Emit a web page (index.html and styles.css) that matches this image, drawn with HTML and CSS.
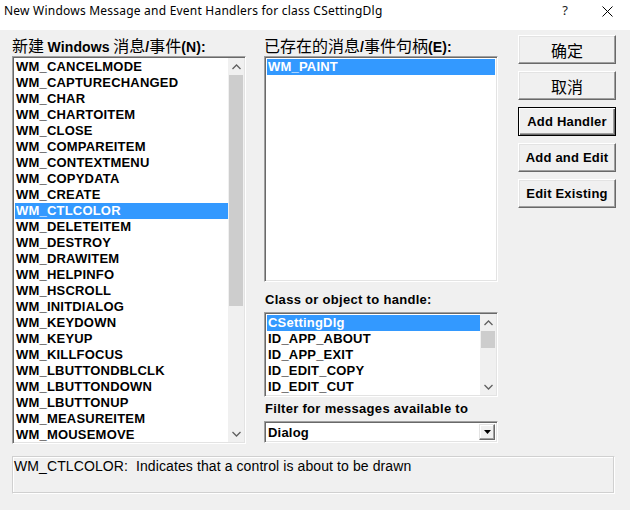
FILE: index.html
```html
<!DOCTYPE html>
<html>
<head>
<meta charset="utf-8">
<link rel="stylesheet" href="styles.css">
</head>
<body>
<div class="window">
  <div class="titlebar">
    <span class="title">New Windows Message and Event Handlers for class CSettingDlg</span>
    <span class="tb-help">?</span>
    <span class="tb-close"><svg width="11" height="11" viewBox="0 0 11 11"><path d="M0.5 0.5 L10.5 10.5 M10.5 0.5 L0.5 10.5" stroke="#000" stroke-width="1" fill="none"/></svg></span>
  </div>
  <div class="body">
    <div class="col col-left">
      <div class="label">新建 <b>Windows</b> 消息<b>/</b>事件<b>(N):</b></div>
      <div class="listbox big">
        <div class="items">
          <div class="item">WM_CANCELMODE</div>
          <div class="item">WM_CAPTURECHANGED</div>
          <div class="item">WM_CHAR</div>
          <div class="item">WM_CHARTOITEM</div>
          <div class="item">WM_CLOSE</div>
          <div class="item">WM_COMPAREITEM</div>
          <div class="item">WM_CONTEXTMENU</div>
          <div class="item">WM_COPYDATA</div>
          <div class="item">WM_CREATE</div>
          <div class="item sel">WM_CTLCOLOR</div>
          <div class="item">WM_DELETEITEM</div>
          <div class="item">WM_DESTROY</div>
          <div class="item">WM_DRAWITEM</div>
          <div class="item">WM_HELPINFO</div>
          <div class="item">WM_HSCROLL</div>
          <div class="item">WM_INITDIALOG</div>
          <div class="item">WM_KEYDOWN</div>
          <div class="item">WM_KEYUP</div>
          <div class="item">WM_KILLFOCUS</div>
          <div class="item">WM_LBUTTONDBLCLK</div>
          <div class="item">WM_LBUTTONDOWN</div>
          <div class="item">WM_LBUTTONUP</div>
          <div class="item">WM_MEASUREITEM</div>
          <div class="item">WM_MOUSEMOVE</div>
        </div>
        <div class="vscroll">
          <div class="arrow"><svg width="9" height="6" viewBox="0 0 9 6"><path d="M0.5 5 L4.5 1 L8.5 5" stroke="#606060" stroke-width="1.3" fill="none"/></svg></div>
          <div class="track"><div class="thumb thumb-big"></div></div>
          <div class="arrow"><svg width="9" height="6" viewBox="0 0 9 6"><path d="M0.5 1 L4.5 5 L8.5 1" stroke="#606060" stroke-width="1.3" fill="none"/></svg></div>
        </div>
      </div>
    </div>
    <div class="col col-mid">
      <div class="label">已存在的消息<b>/</b>事件句柄<b>(E):</b></div>
      <div class="listbox existing">
        <div class="items">
          <div class="item sel">WM_PAINT</div>
        </div>
      </div>
      <div class="label bold-label l2">Class or object to handle:</div>
      <div class="listbox classes">
        <div class="items">
          <div class="item sel">CSettingDlg</div>
          <div class="item">ID_APP_ABOUT</div>
          <div class="item">ID_APP_EXIT</div>
          <div class="item">ID_EDIT_COPY</div>
          <div class="item">ID_EDIT_CUT</div>
        </div>
        <div class="vscroll">
          <div class="arrow"><svg width="9" height="6" viewBox="0 0 9 6"><path d="M0.5 5 L4.5 1 L8.5 5" stroke="#606060" stroke-width="1.3" fill="none"/></svg></div>
          <div class="track"><div class="thumb thumb-small"></div></div>
          <div class="arrow"><svg width="9" height="6" viewBox="0 0 9 6"><path d="M0.5 1 L4.5 5 L8.5 1" stroke="#606060" stroke-width="1.3" fill="none"/></svg></div>
        </div>
      </div>
      <div class="label bold-label l3">Filter for messages available to</div>
      <div class="combo">
        <div class="combo-text">Dialog</div>
        <div class="combo-btn"><svg width="7" height="4" viewBox="0 0 7 4"><path d="M0 0 H7 L3.5 4 Z" fill="#000"/></svg></div>
      </div>
    </div>
    <div class="col col-right">
      <div class="btn cjk">确定</div>
      <div class="btn cjk">取消</div>
      <div class="btn default">Add Handler</div>
      <div class="btn">Add and Edit</div>
      <div class="btn">Edit Existing</div>
    </div>
  </div>
  <div class="status">WM_CTLCOLOR:&nbsp; Indicates that a control is about to be drawn</div>
</div>
</body>
</html>
```

FILE: styles.css
```css
* { box-sizing: border-box; }
html, body { margin: 0; padding: 0; }
body {
  width: 630px;
  height: 510px;
  background: #f0f0f0;
  overflow: hidden;
  font-family: "Liberation Sans", Arial, sans-serif;
  color: #000;
}
.window {
  width: 630px;
  height: 510px;
  background: #f0f0f0;
}
.titlebar {
  height: 30px;
  background: #ffffff;
  display: flex;
  align-items: flex-start;
}
.title {
  font-family: "Noto Sans", "Open Sans", sans-serif;
  font-size: 12px;
  line-height: 16px;
  margin: 3px 0 0 4px;
  flex: 1;
  letter-spacing: 0.22px;
}
.tb-help {
  font-family: "Noto Sans", sans-serif;
  font-size: 13px;
  line-height: 16px;
  margin-top: 2px;
  width: 46px;
  text-align: center;
  color: #222;
  margin-right: -4px;
}
.tb-close {
  width: 46px;
  display: flex;
  justify-content: center;
  padding-top: 6px;
}
.body {
  display: flex;
  padding: 0 0 0 12px;
  height: 414px;
}
.col { display: flex; flex-direction: column; }
.col-left { width: 234px; }
.col-mid { width: 234px; margin-left: 18px; }
.col-right { width: 98px; margin-left: 20px; padding-top: 5px; }
.label {
  font-family: "Noto Sans CJK SC", "Liberation Sans", sans-serif;
  font-size: 16px;
  line-height: 16px;
  height: 16px;
  margin-top: 7px;
  margin-bottom: 3px;
  white-space: nowrap;
}
.label b {
  font-family: "Liberation Sans", Arial, sans-serif;
  font-weight: bold;
  font-size: 14px;
  letter-spacing: 0.1px;
}
.bold-label {
  font-family: "Liberation Sans", Arial, sans-serif;
  font-weight: bold;
  font-size: 13px;
  letter-spacing: 0.3px;
  margin-left: 1px;
}
.l2 { margin-top: 10px; margin-bottom: 4px; }
.l3 { margin-top: 4px; margin-bottom: 4px; }
.listbox {
  background: #fff;
  border-top: 1px solid #a0a0a0;
  border-left: 1px solid #a0a0a0;
  border-right: 1px solid #fff;
  border-bottom: 1px solid #fff;
  box-shadow: inset 1px 1px 0 #696969, inset -1px -1px 0 #e3e3e3;
  padding: 2px;
  display: flex;
  overflow: hidden;
}
.big { height: 388px; }
.existing { height: 226px; }
.classes { height: 85px; }
.items { flex: 1; overflow: hidden; }
.item {
  height: 16px;
  line-height: 16px;
  font-weight: bold;
  font-size: 13px;
  letter-spacing: 0.2px;
  padding-left: 1px;
  white-space: nowrap;
}
.item.sel {
  background: #3399ff;
  color: #fff;
}
.vscroll {
  width: 16px;
  margin: -1px -1px -1px 0;
  background: #f0f0f0;
  display: flex;
  flex-direction: column;
}
.arrow {
  height: 17px;
  display: flex;
  align-items: center;
  justify-content: center;
}
.track {
  flex: 1;
  padding: 0 1px;
}
.thumb { background: #cdcdcd; }
.thumb-big { height: 231px; }
.thumb-small { height: 17px; }
.combo {
  height: 22px;
  background: #fff;
  border-top: 1px solid #a0a0a0;
  border-left: 1px solid #a0a0a0;
  border-right: 1px solid #fff;
  border-bottom: 1px solid #fff;
  box-shadow: inset 1px 1px 0 #696969, inset -1px -1px 0 #e3e3e3;
  display: flex;
  padding: 2px;
}
.combo-text {
  flex: 1;
  font-weight: bold;
  font-size: 13px;
  letter-spacing: 0.2px;
  line-height: 17px;
  padding-left: 1px;
}
.combo-btn {
  width: 16px;
  background: #f0f0f0;
  border-top: 1px solid #e3e3e3;
  border-left: 1px solid #e3e3e3;
  border-right: 1px solid #696969;
  border-bottom: 1px solid #696969;
  box-shadow: inset -1px -1px 0 #a0a0a0, inset 1px 1px 0 #fff;
  display: flex;
  align-items: center;
  justify-content: center;
}
.btn {
  height: 29px;
  margin-bottom: 7px;
  background: #f0f0f0;
  border-top: 1px solid #fff;
  border-left: 1px solid #fff;
  border-right: 1px solid #696969;
  border-bottom: 1px solid #696969;
  box-shadow: inset -1px -1px 0 #a0a0a0, inset 1px 1px 0 #e3e3e3;
  display: flex;
  align-items: center;
  justify-content: center;
  font-weight: bold;
  font-size: 13px;
  letter-spacing: 0.2px;
  white-space: nowrap;
}
.btn.cjk {
  font-family: "Noto Sans CJK SC", sans-serif;
  font-weight: normal;
  font-size: 16px;
  letter-spacing: 0;
}
.btn.default {
  border: 1px solid #000;
  box-shadow: inset 1px 1px 0 #fff, inset -1px -1px 0 #696969, inset -2px -2px 0 #a0a0a0;
}
.status {
  margin: 12px 15px 0 12px;
  height: 38px;
  border: 1px solid #d0d0d0;
  border-right-color: #fff;
  border-bottom-color: #fff;
  box-shadow: inset -1px -1px 0 #d0d0d0, inset 1px 1px 0 #fff;
  font-size: 14px;
  letter-spacing: 0.1px;
  line-height: 16px;
  padding: 1px;
  white-space: nowrap;
}
```
